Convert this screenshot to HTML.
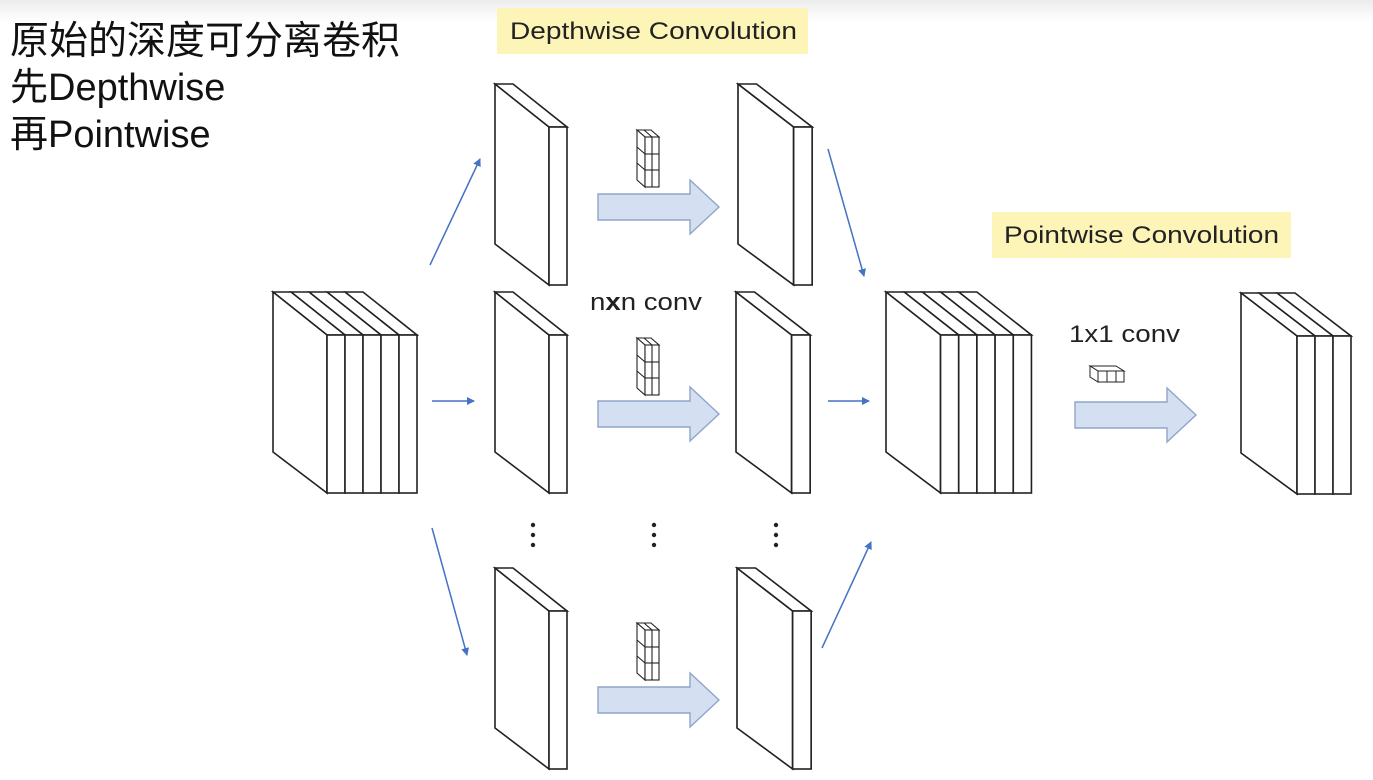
<!DOCTYPE html>
<html><head><meta charset="utf-8"><style>
html,body{margin:0;padding:0;background:#fff;}
body{width:1373px;height:780px;overflow:hidden;position:relative;background:linear-gradient(#ececec 0px,#fff 22px);}
.t{position:absolute;left:10px;font-family:"Liberation Sans","Noto Sans CJK SC",sans-serif;font-size:38px;color:#111;line-height:1;}
svg{position:absolute;left:0;top:0;}
</style></head><body>
<div class="t" style="top:22px;font-size:39px">原始的深度可分离卷积</div>
<div class="t" style="top:69px">先Depthwise</div>
<div class="t" style="top:116px">再Pointwise</div>
<svg width="1373" height="780" viewBox="0 0 1373 780" font-family="Liberation Sans, sans-serif">
<defs>
<g id="s1" fill="#fff" stroke="#222" stroke-width="1.6" stroke-linejoin="miter">
<polygon points="0,0 54,43 54,201 0,160"/>
<polygon points="0,0 18,0 72,43 54,43"/>
<rect x="54" y="43" width="18" height="158"/>
</g>
<g id="s5" fill="#fff" stroke="#222" stroke-width="1.6">
<polygon points="72,0 90,0 144,43 126,43"/>
<polygon points="54,0 72,0 126,43 108,43"/>
<polygon points="36,0 54,0 108,43 90,43"/>
<polygon points="18,0 36,0 90,43 72,43"/>
<polygon points="0,0 18,0 72,43 54,43"/>
<polygon points="0,0 54,43 54,201 0,160"/>
<rect x="54" y="43" width="18" height="158"/>
<rect x="72" y="43" width="18" height="158"/>
<rect x="90" y="43" width="18" height="158"/>
<rect x="108" y="43" width="18" height="158"/>
<rect x="126" y="43" width="18" height="158"/>
</g>
<g id="s3" fill="#fff" stroke="#222" stroke-width="1.6">
<polygon points="36,0 54,0 110,43 92,43"/>
<polygon points="18,0 36,0 92,43 74,43"/>
<polygon points="0,0 18,0 74,43 56,43"/>
<polygon points="0,0 56,43 56,201 0,160"/>
<rect x="56" y="43" width="18" height="158"/>
<rect x="74" y="43" width="18" height="158"/>
<rect x="92" y="43" width="18" height="158"/>
</g>
<g id="k" fill="#fff" stroke="#222" stroke-width="1.1">
<polygon points="0,0 14,0 22,7 8,7"/>
<polygon points="0,0 8,7 8,57 0,50"/>
<rect x="8" y="7" width="14" height="50"/>
<line x1="15" y1="7" x2="15" y2="57"/>
<line x1="8" y1="24" x2="22" y2="24"/>
<line x1="8" y1="40" x2="22" y2="40"/>
<line x1="7" y1="0" x2="15" y2="7"/>
<line x1="0" y1="17" x2="8" y2="24"/>
<line x1="0" y1="33" x2="8" y2="40"/>
</g>
<g id="ba" fill="#d4e0f1" stroke="#8fa6c8" stroke-width="1.4">
<polygon points="0,-13 92,-13 92,-27 121,0 92,27 92,13 0,13"/>
</g>
<marker id="ah" markerWidth="8" markerHeight="8" refX="7" refY="4" orient="auto" markerUnits="userSpaceOnUse"><polygon points="0,0 8,4 0,8" fill="#4472c4"/></marker>
</defs>
<rect x="497" y="8" width="311" height="46" fill="#fdf5b8"/>
<text x="510" y="39" font-size="24" fill="#222" textLength="287" lengthAdjust="spacingAndGlyphs">Depthwise Convolution</text>
<rect x="992" y="212" width="299" height="46" fill="#fdf5b8"/>
<text x="1004" y="243" font-size="24" fill="#222" textLength="275" lengthAdjust="spacingAndGlyphs">Pointwise Convolution</text>
<text x="590" y="310" font-size="24" fill="#222" textLength="112" lengthAdjust="spacingAndGlyphs">n<tspan font-weight="bold">x</tspan>n conv</text>
<text x="1069" y="342" font-size="24" fill="#222" textLength="111" lengthAdjust="spacingAndGlyphs">1x1 conv</text>

<use href="#s5" x="273" y="292"/>
<use href="#s1" x="495" y="84"/>
<use href="#s1" x="495" y="292"/>
<use href="#s1" x="495" y="568"/>
<use href="#s3" x="1241" y="293"/>
<g transform="translate(738,84) scale(1.03,1)"><use href="#s1"/></g>
<g transform="translate(736,292) scale(1.03,1)"><use href="#s1"/></g>
<g transform="translate(737,568) scale(1.03,1)"><use href="#s1"/></g>
<g transform="translate(886,292) scale(1.01,1)"><use href="#s5"/></g>

<use href="#k" x="637" y="130"/>
<use href="#k" x="637" y="338"/>
<use href="#k" x="637" y="623"/>
<g fill="#fff" stroke="#222" stroke-width="1">
<polygon points="1090,366 1116,366 1124,371 1098,371"/>
<polygon points="1090,366 1098,371 1098,382 1090,377"/>
<rect x="1098" y="371" width="26" height="11"/>
<line x1="1107" y1="371" x2="1107" y2="382"/><line x1="1116" y1="371" x2="1116" y2="382"/>
</g>

<use href="#ba" x="598" y="207"/>
<use href="#ba" x="598" y="414"/>
<use href="#ba" x="598" y="700"/>
<use href="#ba" x="1075" y="415"/>

<g stroke="#4472c4" stroke-width="1.5" marker-end="url(#ah)">
<line x1="430" y1="265" x2="480" y2="159"/>
<line x1="432" y1="401" x2="474" y2="401"/>
<line x1="432" y1="528" x2="467" y2="655"/>
<line x1="828" y1="149" x2="864" y2="276"/>
<line x1="828" y1="401" x2="869" y2="401"/>
<line x1="822" y1="648" x2="871" y2="542"/>
</g>
<g fill="#222">
<circle cx="533" cy="525" r="2.2"/><circle cx="533" cy="535" r="2.2"/><circle cx="533" cy="545" r="2.2"/>
<circle cx="654" cy="525" r="2.2"/><circle cx="654" cy="535" r="2.2"/><circle cx="654" cy="545" r="2.2"/>
<circle cx="776" cy="525" r="2.2"/><circle cx="776" cy="535" r="2.2"/><circle cx="776" cy="545" r="2.2"/>
</g>
</svg>
</body></html>
